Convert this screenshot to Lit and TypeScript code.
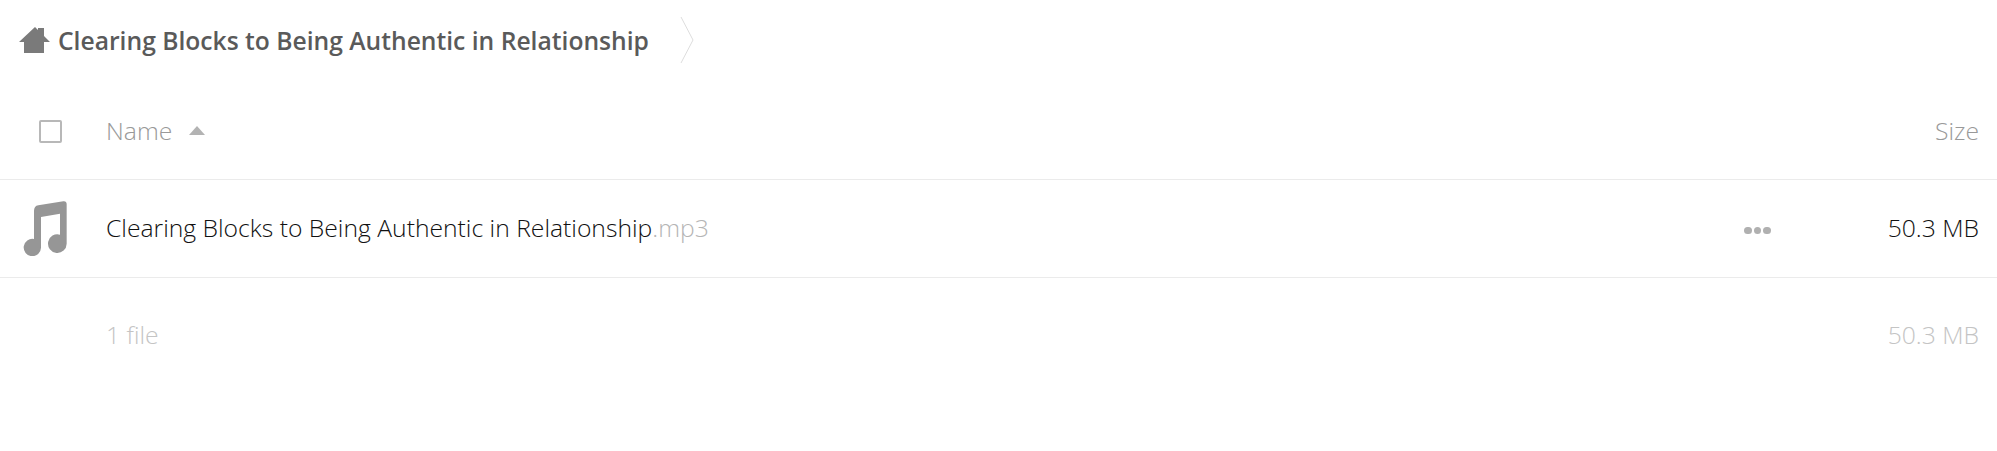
import { LitElement, html, css } from "lit";
import { customElement } from "lit/decorators.js";

@customElement("app-root")
export class AppRoot extends LitElement {
  static styles = css`
    :host { display: block; width: 1997px; height: 451px; background: #fff; font-family: "Open Sans", sans-serif; font-weight: 300; overflow: hidden; }
    .crumbs { display: flex; align-items: center; height: 80px; padding-left: 19px; }
    .home { width: 31px; height: 26px; margin-right: 8px; flex: none; }
    .crumb { font-size: 24.65px; font-weight: 600; color: #5a5a5a; white-space: nowrap; }
    .sep { width: 14px; height: 46px; margin-left: 31px; flex: none; }
    .row { display: grid; grid-template-columns: 106px 1fr 100px 140px; align-items: center; padding-right: 18px; font-size: 24.7px; }
    .head { height: 100px; padding-top: 2px; border-bottom: 1px solid #ebebeb; box-sizing: border-box; color: #999; }
    .file { height: 98px; padding-bottom: 2px; border-bottom: 1px solid #ebebeb; box-sizing: border-box; color: #111; }
    .sum { height: 112px; color: #c4c4c4; }
    .box { width: 19px; height: 19px; border: 2px solid #b8b8b8; border-radius: 2px; margin: 2px 0 0 39px; }
    .name { display: flex; align-items: center; }
    .arrow { width: 0; height: 0; margin-left: 17px; border: 8px solid transparent; border-top: 0; border-bottom: 9px solid #b3b3b3; }
    .size { text-align: right; }
    .ext { color: #b5b5b5; }
    .note { width: 44px; height: 55px; margin: 2px 0 0 23px; }
    .dots { display: flex; gap: 2px; justify-self: start; margin: 6px 0 0 5px; }
    .dots i { width: 7.5px; height: 7.5px; border-radius: 50%; background: #b0b0b0; }
  `;
  render() {
    return html`
      <div class="crumbs">
        <svg class="home" viewBox="0 0 31 26"><path fill="#7a7a7a" d="M0 15 L16 0 L19 3 L19 1 L25 1 L25 9 L31 15 L25 15 L25 26 L5 26 L5 15 Z"/></svg>
        <span class="crumb">Clearing Blocks to Being Authentic in Relationship</span>
        <svg class="sep" viewBox="0 0 14 46"><path fill="none" stroke="#ddd" stroke-width="1" d="M1 0 L13 23 L1 46"/></svg>
      </div>
      <div class="row head">
        <div class="box"></div>
        <div class="name">Name<span class="arrow"></span></div>
        <div></div>
        <div class="size">Size</div>
      </div>
      <div class="row file">
        <svg class="note" viewBox="40 32 130 165"><path fill="#969696" d="M72 62 Q72 47 85 45 L160 33 Q170 32 170 42 L170 160 A28 28 0 1 1 150 133 L150 70 L93 80 L93 172 A26 26 0 1 1 72 146 Z"/></svg>
        <div class="name"><span>Clearing Blocks to Being Authentic in Relationship<span class="ext">.mp3</span></span></div>
        <div class="dots"><i></i><i></i><i></i></div>
        <div class="size">50.3 MB</div>
      </div>
      <div class="row sum">
        <div></div>
        <div>1 file</div>
        <div></div>
        <div class="size">50.3 MB</div>
      </div>
    `;
  }
}
